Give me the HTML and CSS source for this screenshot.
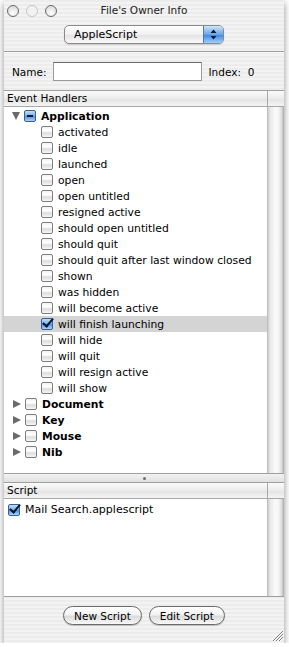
FILE: index.html
```html
<!DOCTYPE html>
<html lang="en">
<head>
  <meta charset="UTF-8" />
  <title>File's Owner Info</title>
  <link rel="stylesheet" href="styles.css">
</head>
<body>
  <div class="window">
    <div class="titlebar">
      <div class="lights">
        <span class="light"></span>
        <span class="light light-off"></span>
        <span class="light"></span>
      </div>
      <div class="title">File's Owner Info</div>
    </div>

    <div class="toolbar">
      <div class="popup">
        <span class="popup-label">AppleScript</span>
        <span class="popup-arrows">
          <svg width="7" height="11" viewBox="0 0 7 11"><path d="M3.5 0.5 L6.5 4 L0.5 4 Z M3.5 10.5 L6.5 7 L0.5 7 Z" fill="#0a1a3a"/></svg>
        </span>
      </div>
    </div>

    <div class="name-row">
      <label class="name-label">Name:</label>
      <input class="name-field" type="text">
      <span class="index-label">Index:&nbsp; 0</span>
    </div>

    <div class="table handlers">
      <div class="th">Event Handlers</div>
      <div class="th corner"></div>
      <div class="tbody">
        <div class="row group"><span class="tri tri-down"></span><span class="cb cb-mixed"></span>Application</div>
        <div class="row child"><span class="cb"></span>activated</div>
        <div class="row child"><span class="cb"></span>idle</div>
        <div class="row child"><span class="cb"></span>launched</div>
        <div class="row child"><span class="cb"></span>open</div>
        <div class="row child"><span class="cb"></span>open untitled</div>
        <div class="row child"><span class="cb"></span>resigned active</div>
        <div class="row child"><span class="cb"></span>should open untitled</div>
        <div class="row child"><span class="cb"></span>should quit</div>
        <div class="row child"><span class="cb"></span>should quit after last window closed</div>
        <div class="row child"><span class="cb"></span>shown</div>
        <div class="row child"><span class="cb"></span>was hidden</div>
        <div class="row child"><span class="cb"></span>will become active</div>
        <div class="row child selected"><span class="cb cb-checked"></span>will finish launching</div>
        <div class="row child"><span class="cb"></span>will hide</div>
        <div class="row child"><span class="cb"></span>will quit</div>
        <div class="row child"><span class="cb"></span>will resign active</div>
        <div class="row child"><span class="cb"></span>will show</div>
        <div class="row group"><span class="tri tri-right"></span><span class="cb"></span>Document</div>
        <div class="row group"><span class="tri tri-right"></span><span class="cb"></span>Key</div>
        <div class="row group"><span class="tri tri-right"></span><span class="cb"></span>Mouse</div>
        <div class="row group"><span class="tri tri-right"></span><span class="cb"></span>Nib</div>
      </div>
      <div class="scroller"></div>
    </div>

    <div class="splitter"><span class="dimple"></span></div>

    <div class="table scripts">
      <div class="th">Script</div>
      <div class="th corner"></div>
      <div class="tbody">
        <div class="row script-row"><span class="cb cb-checked"></span>Mail Search.applescript</div>
      </div>
      <div class="scroller"></div>
    </div>

    <div class="footer">
      <button class="pill">New Script</button>
      <button class="pill">Edit Script</button>
      <svg class="grip" width="11" height="11" viewBox="0 0 11 11">
        <path d="M1 11 L11 1 M4 11 L11 4 M7 11 L11 7" stroke="#7d7d7d" stroke-width="1"/>
        <path d="M2 11 L11 2 M5 11 L11 5 M8 11 L11 8" stroke="#ffffff" stroke-width="1"/>
      </svg>
    </div>
  </div>
</body>
</html>
```

FILE: styles.css
```css
body {
  margin: 0;
  background: #fff;
  font-family: "DejaVu Sans", sans-serif;
  font-size: 10px;
  color: #000;
}
.window {
  position: relative;
  margin-left: 4px;
  width: 280px;
  height: 643px;
  display: flex;
  flex-direction: column;
  background: repeating-linear-gradient(#ececec 0, #ececec 2px, #f3f3f3 2px, #f3f3f3 4px);
  box-shadow: 0 3px 7px rgba(0,0,0,0.45);
}
.titlebar {
  height: 22px;
  display: flex;
  align-items: center;
  position: relative;
}
.lights {
  display: flex;
  gap: 7px;
  padding-left: 3px;
}
.light {
  width: 10px;
  height: 10px;
  border: 1.5px solid #6a6a6a;
  border-radius: 50%;
  background: radial-gradient(circle at 50% 70%, #fff, #d2d2d2);
}
.light-off {
  border-color: #c6c6c6;
  background: #f2f2f2;
}
.title {
  position: absolute;
  left: 0;
  right: 0;
  top: 4px;
  text-align: center;
  font-size: 10.5px;
  color: #222;
}
.toolbar {
  height: 30px;
  display: flex;
  justify-content: center;
  padding-top: 3px;
  box-sizing: border-box;
  border-bottom: 1px solid #9d9d9d;
}
.popup {
  width: 160px;
  height: 19px;
  display: flex;
  border: 1px solid #8a8a8a;
  border-radius: 5px;
  box-sizing: border-box;
  background: linear-gradient(#ffffff, #f0f0f0 50%, #e2e2e2 51%, #fafafa);
  box-shadow: 0 1px 1px rgba(0,0,0,0.15);
  overflow: hidden;
}
.popup-label {
  flex: 1;
  padding-left: 9px;
  line-height: 17px;
  font-size: 11px;
}
.popup-arrows {
  width: 19px;
  display: flex;
  align-items: center;
  justify-content: center;
  border-left: 1px solid #4a78b8;
  background: linear-gradient(#cfe4fb, #6aa3e8 50%, #3c84e0 51%, #9ed0ff);
}
.name-row {
  height: 37px;
  display: flex;
  align-items: center;
  border-top: 1px solid #fafafa;
}
.name-label {
  margin-left: 8px;
  font-size: 10.5px;
}
.name-field {
  margin: 0 0 0 6px;
  width: 149px;
  height: 19px;
  box-sizing: border-box;
  border: 1px solid #9a9a9a;
  border-top-color: #6b6b6b;
  background: #fff;
  padding: 0;
}
.index-label {
  margin-left: 7px;
  font-size: 10.5px;
}
.table {
  display: grid;
  grid-template-columns: 1fr 17px;
  border-top: 1px solid #a0a0a0;
  border-bottom: 1px solid #a0a0a0;
  background: #fff;
}
.th {
  height: 15px;
  line-height: 15px;
  padding-left: 3px;
  border-bottom: 1px solid #a8a8a8;
  background: linear-gradient(#fafafa, #ececec 50%, #e2e2e2 51%, #f4f4f4);
  font-size: 10.5px;
}
.th.corner {
  border-left: 1px solid #a8a8a8;
  padding: 0;
}
.handlers .tbody {
  height: 365px;
}
.scripts .tbody {
  height: 96px;
}
.tbody {
  padding-top: 1px;
  overflow: hidden;
}
.scroller {
  background: linear-gradient(90deg, #cfcfcf, #e9e9e9 15%, #fafafa 45%, #f6f6f6 65%, #dcdcdc 85%, #a9a9a9);
  border-left: 1px solid #bdbdbd;
}
.row {
  height: 16px;
  display: flex;
  align-items: center;
  white-space: nowrap;
  font-size: 10.75px;
}
.row.group {
  padding-left: 8px;
  font-weight: bold;
}
.row.child {
  padding-left: 37px;
}
.row.selected {
  background: #d4d4d4;
}
.row.script-row {
  padding-left: 4px;
  height: 19px;
  font-size: 11px;
}
.tri {
  width: 0;
  height: 0;
  margin-right: 4px;
}
.tri-down {
  border-left: 4.5px solid transparent;
  border-right: 4.5px solid transparent;
  border-top: 8px solid #6a6a6a;
}
.tri-right {
  margin-left: 1px;
  border-top: 4.5px solid transparent;
  border-bottom: 4.5px solid transparent;
  border-left: 8px solid #6a6a6a;
}
.cb {
  width: 12px;
  height: 12px;
  margin-right: 5px;
  box-sizing: border-box;
  border: 1px solid #7e7e7e;
  border-radius: 2px;
  background: linear-gradient(#f4f4f4, #ffffff 40%, #dcdcdc 60%, #f8f8f8);
  flex: none;
  position: relative;
}
.cb-mixed, .cb-checked {
  border-color: #3a5f94;
  background: linear-gradient(#c4dcf8, #79aee9 50%, #4d8fe0 51%, #a6d3fb);
}
.cb-mixed::after {
  content: "";
  position: absolute;
  left: 2px;
  right: 2px;
  top: 4px;
  height: 2px;
  background: #0d1c36;
}
.cb-checked::after {
  content: "";
  position: absolute;
  left: 3px;
  top: -3px;
  width: 4px;
  height: 9px;
  border-right: 2px solid #0b1630;
  border-bottom: 2px solid #0b1630;
  transform: rotate(40deg);
}
.splitter {
  height: 8px;
  display: flex;
  align-items: center;
  justify-content: center;
  background: linear-gradient(#f2f2f2, #e0e0e0);
}
.dimple {
  width: 3px;
  height: 3px;
  border-radius: 50%;
  background: #6d6d6d;
}
.footer {
  flex: 1;
  display: flex;
  justify-content: center;
  align-items: flex-start;
  gap: 7px;
  padding-top: 9px;
  position: relative;
}
.pill {
  height: 19px;
  padding: 0 10px;
  border: 1px solid #6a6a6a;
  border-radius: 10px;
  background: linear-gradient(#ffffff, #f2f2f2 45%, #dcdcdc 55%, #f8f8f8);
  box-shadow: 0 1px 1px rgba(0,0,0,0.2);
  font-family: "DejaVu Sans", sans-serif;
  font-size: 10.5px;
  color: #000;
}
.grip {
  position: absolute;
  right: 1px;
  bottom: 2px;
}
```
